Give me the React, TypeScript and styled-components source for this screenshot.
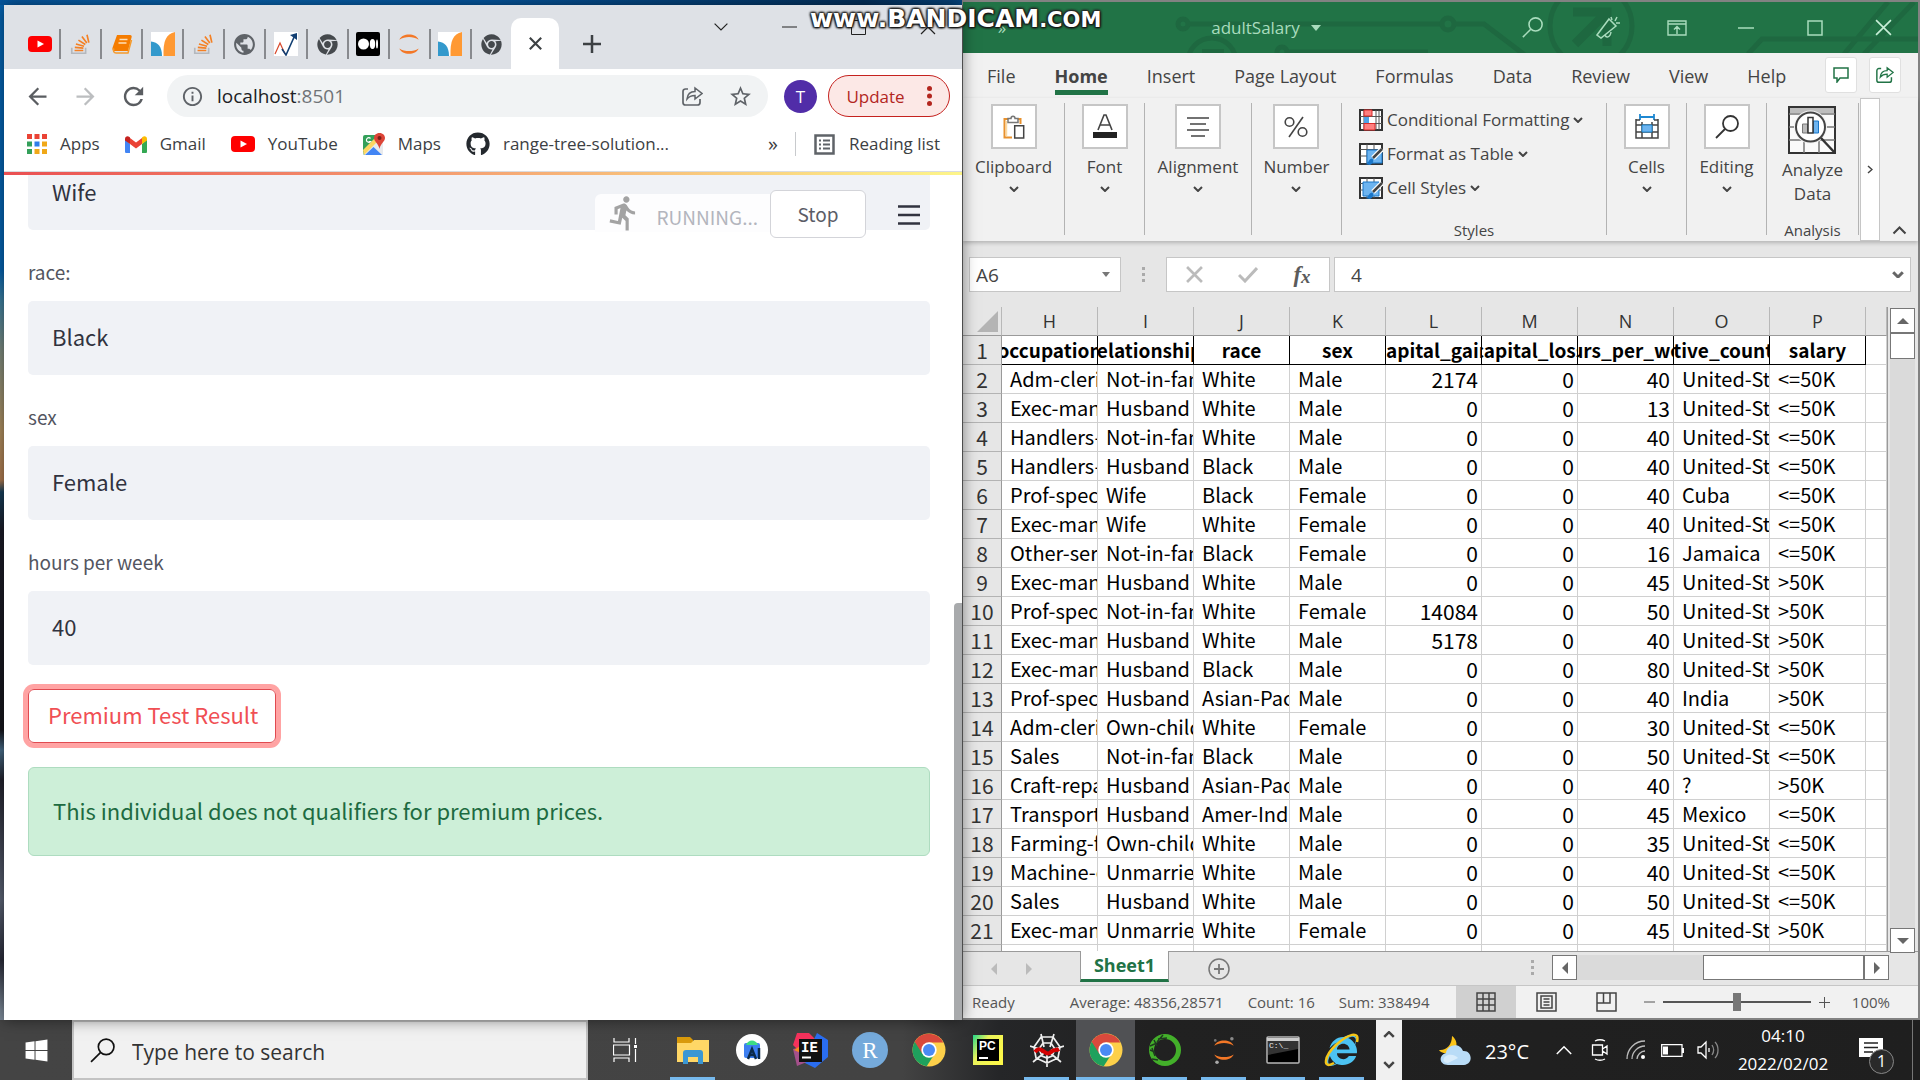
import React from 'react';
import styled, { createGlobalStyle, css } from 'styled-components';
import { FaChrome, FaGithub, FaWindows, FaInternetExplorer } from 'react-icons/fa';
import { MdDirectionsRun, MdPublic, MdStarBorder, MdRefresh, MdArrowBack, MdArrowForward, MdInfoOutline } from 'react-icons/md';

const ui = `"Open Sans", "Noto Sans", sans-serif`;
const source = `"Noto Sans CJK SC", "Noto Sans", sans-serif`;

const GlobalStyle = createGlobalStyle`
  *, *::before, *::after { box-sizing: border-box; }
  body { margin: 0; font-family: ${ui}; overflow: hidden; }
  button, input { font: inherit; color: inherit; margin: 0; padding: 0; border: 0; background: none; border-radius: 0; outline: 0; }
  button { display: inline-flex; align-items: center; justify-content: center; cursor: pointer; white-space: nowrap; }
  a { color: inherit; text-decoration: none; }
  svg { display: block; flex: none; }
`;

/* ---------- desktop ---------- */
const Screen = styled.div`
  position: relative;
  display: flex;
  flex-direction: column;
  height: 100vh;
  overflow: hidden;
`;
const Desktop = styled.main`
  flex: 1;
  min-height: 0;
  display: grid;
  grid-template-columns: 962fr 958fr;
  background:
    linear-gradient(90deg, #0557a0, #0a63ad 12%, #0557a0 25%, #03305c 45%, #0a5aa0 55%, #07497f) top / 100% 5px no-repeat,
    linear-gradient(#0563b0 0, #0563b0 270px, #3d7fa0 300px, #7d8b80 350px, #b09060 430px, #b07b50 480px, #17405c 492px, #1c1c28 530px, #16161c 730px, #4a6f8c 750px, #23232e 780px, #5d6577 900px, #2a2c3a 960px, #7a8796 1010px) left / 4px 100% no-repeat,
    #16161c;
`;
const Watermark = styled.div`
  position: absolute;
  left: 810px;
  top: 4px;
  font: bold 25px/30px "DejaVu Sans", sans-serif;
  color: #fff;
  text-shadow: 0 0 3px #111, 1px 1px 2px #111, -1px -1px 2px #333, 1px -1px 2px #333, -1px 1px 2px #222;
  z-index: 5;
  pointer-events: none;
  small { font-size: 21px; }
`;

/* ---------- Chrome ---------- */
const Browser = styled.section`
  position: relative;
  z-index: 1;
  margin: 5px 0 0 4px;
  display: flex;
  flex-direction: column;
  min-height: 0;
  min-width: 0;
  background: #fff;
  box-shadow: 0 0 14px rgba(0, 0, 0, 0.5), 1px 0 0 #666;
`;
const TabStrip = styled.div`
  display: flex;
  align-items: flex-end;
  height: 64px;
  background: #dee1e6;
`;
const PinnedTabs = styled.div`
  display: flex;
  width: 507px;
  padding-left: 16px;
`;
const PinnedTab = styled.button`
  flex: 1;
  height: 30px;
  margin-bottom: 10px;
  border-right: 2px solid #888a8e;
  &:last-child { border: 0; }
`;
const ActiveTab = styled.button`
  width: 48px;
  height: 51px;
  background: #fff;
  border-radius: 10px 10px 0 0;
`;
const NewTab = styled.button`
  width: 66px;
  height: 51px;
`;
const WindowButtons = styled.div`
  display: flex;
  margin-left: auto;
  align-self: flex-start;
`;
const WindowButton = styled.button`
  width: 69px;
  height: 44px;
`;
const Toolbar = styled.div`
  display: flex;
  align-items: center;
  height: 54px;
  padding: 0 12px 0 9px;
`;
const NavButton = styled.button<{ $dim?: boolean }>`
  width: 48px;
  height: 42px;
  color: ${p => (p.$dim ? '#bcbec0' : '#5a5d61')};
`;
const Omnibox = styled.div`
  flex: 1;
  display: flex;
  align-items: center;
  height: 42px;
  margin-left: 10px;
  padding: 0 16px 0 14px;
  border-radius: 21px;
  background: #f1f3f4;
  color: #5f6368;
`;
const Url = styled.div`
  flex: 1;
  padding-left: 13px;
  font-size: 19px;
  line-height: 26px;
  color: #707478;
  b { font-weight: 400; color: #202124; }
`;
const OmniButton = styled.button`
  width: 24px;
  height: 24px;
  margin-left: 24px;
`;
const Avatar = styled.button`
  width: 33px;
  height: 33px;
  margin: 0 11px 0 16px;
  border-radius: 50%;
  background: #512da8;
  color: #fff;
  font-size: 17px;
`;
const UpdateButton = styled.button`
  width: 122px;
  height: 42px;
  gap: 22px;
  border: 1px solid #c5221f;
  border-radius: 21px;
  background: #fce8e6;
  color: #b3261e;
  font-size: 17px;
`;
const BookmarkBar = styled.nav`
  display: flex;
  align-items: center;
  gap: 25px;
  height: 49px;
  padding: 0 22px 6px 23px;
  border-bottom: 1px solid #dadce0;
  font-size: 17px;
  line-height: 24px;
  color: #3c4043;
`;
const Bookmark = styled.a`
  display: flex;
  align-items: center;
  gap: 13px;
  white-space: nowrap;
`;
const ReadingList = styled.button`
  gap: 14px;
  height: 24px;
  padding-left: 18px;
  margin-left: -8px;
  border-left: 1px solid #c8cacd;
`;
const Overflow = styled.button`
  margin-left: auto;
  font-size: 20px;
`;

/* ---------- Streamlit page ---------- */
const Page = styled.div`
  position: relative;
  flex: 1;
  min-height: 0;
  overflow: hidden;
  padding: 3px 32px 0 24px;
  font-family: ${source};
  color: #31333f;
  &::before {
    content: '';
    position: absolute;
    inset: 0 0 auto;
    height: 3px;
    background: linear-gradient(90deg, #ea4f52, #f5a573 50%, #fdf58a);
  }
`;
const Field = styled.div<{ $cut?: boolean }>`
  display: flex;
  flex-direction: column;
  ${p => p.$cut && css`
    justify-content: flex-end;
    height: 55px;
    overflow: hidden;
  `}
`;
const FieldLabel = styled.label`
  padding: 27px 0 15px;
  font-size: 19px;
  line-height: 29px;
  color: #53555f;
`;
const TextBox = styled.input`
  flex: none;
  width: 100%;
  height: 74px;
  padding: 0 24px 4px;
  border-radius: 5px;
  background: #f0f2f6;
  font-size: 22px;
`;
const ResultButton = styled.button`
  height: 54px;
  margin-top: 24px;
  padding: 0 17px 4px 19px;
  border: 1px solid #e04a50;
  border-radius: 6px;
  box-shadow: 0 0 0 5px #ffa3a3;
  color: #f04f54;
  font-size: 22px;
`;
const Alert = styled.div`
  margin-top: 24px;
  padding: 26px 24px 29px;
  border: 1px solid #aedcc0;
  border-radius: 6px;
  background: #cdefd8;
  color: #1d6b41;
  font-size: 22px;
  line-height: 32px;
`;
const StatusWidget = styled.div`
  position: absolute;
  top: 18px;
  right: 96px;
  display: flex;
  align-items: flex-start;
`;
const Running = styled.div`
  display: flex;
  align-items: center;
  gap: 14px;
  height: 38px;
  margin-top: 4px;
  padding: 0 12px 0 10px;
  background: #fdfdfe;
  border-radius: 6px 0 0 0;
  color: #b3b5bd;
  font-size: 19px;
  line-height: 28px;
  svg { color: #a3a3a3; }
  span { padding-top: 8px; }
`;
const StopButton = styled.button`
  width: 96px;
  height: 48px;
  padding-bottom: 2px;
  border: 1px solid #d3d4d9;
  border-radius: 6px;
  background: #fff;
  color: #5b5d67;
  font-size: 19px;
`;
const MenuButton = styled.button`
  position: absolute;
  top: 32px;
  right: 42px;
  width: 22px;
  height: 22px;
`;
const PageThumb = styled.div`
  position: absolute;
  top: 431px;
  right: 0;
  bottom: 0;
  width: 8px;
  background: #a8aaac;
  border-radius: 4px 0 0 0;
`;

/* ---------- Excel ---------- */
const Excel = styled.section`
  display: flex;
  flex-direction: column;
  min-width: 0;
  min-height: 0;
  border: solid #828282;
  border-width: 2px 2px 2px 1px;
  background: #e6e6e6;
  color: #444;
`;
const TitleBar = styled.header`
  position: relative;
  display: flex;
  height: 51px;
  flex: none;
  background: #217346;
  color: #a9dcbd;
  font-size: 17px;
`;
const Circuit = styled.svg`
  position: absolute;
  right: 0;
  top: 0;
`;
const MoreTools = styled.button`
  position: relative;
  width: 78px;
`;
const DocName = styled.button`
  position: relative;
  flex: 1;
  gap: 11px;
`;
const TitleButton = styled(WindowButton)<{ $wide?: boolean }>`
  position: relative;
  height: 51px;
  width: ${p => (p.$wide ? 82 : 69)}px;
`;
const MenuRow = styled.nav`
  display: flex;
  gap: 39px;
  height: 45px;
  flex: none;
  padding: 0 18px 0 24px;
  background: #f1f1f1;
  font-size: 18px;
`;
const MenuTab = styled.button<{ $on?: boolean }>`
  height: 42px;
  padding-top: 9px;
  border-bottom: 5px solid ${p => (p.$on ? '#217346' : 'transparent')};
  font-weight: ${p => (p.$on ? 700 : 400)};
`;
const MenuActions = styled.div`
  display: flex;
  gap: 12px;
  margin-left: auto;
  padding-top: 4px;
`;
const ActionButton = styled.button`
  width: 32px;
  height: 36px;
  border: 1px solid #e0e0e0;
  border-radius: 3px;
  background: #fff;
`;
const Ribbon = styled.div`
  position: relative;
  display: flex;
  height: 143px;
  flex: none;
  background: #f1f1f1;
  box-shadow: 0 2px 4px rgba(0, 0, 0, 0.22);
  font-size: 17px;
  line-height: 24px;
`;
const Group = styled.div<{ $w?: number }>`
  display: flex;
  flex-direction: column;
  align-items: center;
  height: 132px;
  margin-top: 5px;
  border-right: 1px solid #b3b3b3;
  ${p => (p.$w ? `width: ${p.$w}px;` : 'flex: 1;')}
`;
const GroupButton = styled.button`
  flex-direction: column;
  margin-top: 1px;
`;
const IconBox = styled.span`
  display: grid;
  place-items: center;
  width: 46px;
  height: 45px;
  margin-bottom: 6px;
  border: 2px solid #c6c6c6;
  background: #fff;
`;
const ChevronGap = styled.span`
  padding-top: 7px;
`;
const StyleList = styled.div`
  display: flex;
  flex-direction: column;
  align-items: flex-start;
  align-self: stretch;
  padding-left: 17px;
`;
const StyleButton = styled.button`
  height: 34px;
  gap: 4px;
`;
const GroupCaption = styled.span`
  margin-top: auto;
  margin-bottom: -7px;
  font-size: 15px;
`;
const AnalyzeButton = styled.button`
  flex-direction: column;
  padding-top: 3px;
  white-space: normal;
  svg { margin-bottom: 4px; }
`;
const RibbonScroll = styled.button`
  width: 20px;
  margin-left: 1px;
  border: 1px solid #c6c6c6;
  background: #fff;
`;
const CollapseButton = styled.button`
  width: 38px;
  align-items: flex-end;
  padding-bottom: 6px;
`;
const FormulaRow = styled.div`
  display: flex;
  height: 66px;
  flex: none;
  padding: 16px 7px 15px 6px;
  font-size: 20px;
`;
const NameBox = styled.div`
  display: flex;
  align-items: center;
  width: 152px;
  padding: 0 10px 0 6px;
  border: 1px solid #c6c6c6;
  background: #fff;
  font-size: 19px;
  input { width: 100%; min-width: 0; }
`;
const Grip = styled.span`
  display: grid;
  place-items: center;
  width: 45px;
`;
const FormulaButtons = styled.div`
  display: flex;
  align-items: center;
  width: 164px;
  margin-right: 4px;
  border: 1px solid #c6c6c6;
  background: #fff;
  button { flex: 1; height: 33px; }
`;
const FxButton = styled.button`
  font: italic bold 23px/28px "Liberation Serif", serif;
  color: #5b5b5b;
  sub { font-size: 19px; line-height: 20px; padding-top: 4px; }
`;
const FormulaBox = styled(NameBox)`
  flex: 1;
  width: auto;
  padding: 0 6px 0 16px;
`;
const GridArea = styled.div`
  flex: 1;
  min-height: 0;
  display: flex;
`;
const SheetClip = styled.div`
  flex: 1;
  min-width: 0;
  overflow: hidden;
  border-right: 1px solid #9a9a9a;
`;
const Sheet = styled.table`
  width: 100%;
  table-layout: fixed;
  border-collapse: separate;
  border-spacing: 0;
  background: #fff;
  font-family: ${source};
  font-size: 20px;
  line-height: 28px;
  color: #000;
  tr { height: 29px; }
  th, td { height: 29px; padding: 0; overflow: hidden; white-space: nowrap; }
`;
const ColHead = styled.th`
  border-right: 1px solid #b8b8b8;
  border-bottom: 1px solid #9a9a9a;
  background: #e6e6e6;
  font-family: ${ui};
  font-weight: 400;
  font-size: 18px;
  color: #333;
`;
const RowHead = styled.th`
  border-right: 1px solid #9a9a9a;
  border-bottom: 1px solid #b3b3b3;
  background: #e6e6e6;
  font-weight: 400;
  font-size: 21px;
  color: #333;
`;
const Corner = styled(ColHead)`
  svg { margin: 0 3px 0 auto; }
`;
const Cell = styled.td<{ $num?: boolean }>`
  border-right: 1px solid #d0d0d0;
  border-bottom: 1px solid #d0d0d0;
  ${p => p.$num && 'text-align: right; font-size: 21px;'}
  && { padding: ${p => (p.$num ? '0 3px 0 0' : '0 0 0 8px')}; }
`;
const TitleCell = styled.td`
  border-right: 1px solid #000;
  border-bottom: 1px solid #000;
  font-weight: 700;
  font-size: 19px;
  div { display: flex; justify-content: center; height: 28px; }
`;
const VScroll = styled.div`
  display: flex;
  flex-direction: column;
  width: 25px;
  margin: 1px 3px -2px 2px;
  background: #dadada;
`;
const ScrollButton = styled.button`
  position: relative;
  width: 25px;
  height: 25px;
  flex: none;
  border: 1px solid #777;
  background: #fff;
`;
const VThumb = styled.div`
  height: 26px;
  margin-bottom: auto;
  border: 1px solid #777;
  background: #fff;
`;
const SheetBar = styled.div`
  display: flex;
  height: 35px;
  flex: none;
  border-top: 1px solid #9a9a9a;
  border-bottom: 1px solid #c6c6c6;
`;
const SheetNav = styled.div`
  display: flex;
  justify-content: space-between;
  width: 117px;
  padding: 0 45px 0 25px;
`;
const SheetTab = styled.button`
  width: 89px;
  height: 31px;
  margin-top: -1px;
  border: solid #9a9a9a;
  border-width: 0 1px;
  border-bottom: 3px solid #217346;
  background: #fff;
  color: #217346;
  font-weight: 700;
  font-size: 18px;
`;
const AddSheet = styled.button`
  width: 100px;
`;
const HScroll = styled.div`
  display: flex;
  width: 337px;
  height: 25px;
  margin: 3px 29px 0 auto;
`;
const HGrip = styled(Grip)`
  width: 38px;
  margin-left: auto;
  height: 31px;
`;
const HGroup = styled.div`
  display: flex;
  margin-left: auto;
`;
const HTrack = styled.div`
  display: flex;
  flex: 1;
  justify-content: flex-end;
  background: #dadada;
`;
const HThumb = styled.div`
  width: 161px;
  border: 1px solid #777;
  background: #fff;
`;
const StatusBar = styled.footer`
  display: flex;
  align-items: center;
  height: 32px;
  flex: none;
  padding: 0 28px 0 9px;
  background: #f1f1f1;
  font-size: 15px;
  color: #555;
`;
const Stats = styled.div`
  display: flex;
  gap: 24px;
  margin-left: 55px;
`;
const ViewButton = styled.button<{ $on?: boolean }>`
  width: 60px;
  height: 32px;
  background: ${p => (p.$on ? '#d0d0d0' : 'transparent')};
`;
const Views = styled.div`
  display: flex;
  margin-left: auto;
`;
const ZoomButton = styled.button`
  width: 27px;
  height: 32px;
`;
const ZoomSlider = styled.input`
  appearance: none;
  width: 148px;
  height: 18px;
  background: linear-gradient(#555, #555) center / 100% 2px no-repeat;
  &::-webkit-slider-thumb { appearance: none; width: 8px; height: 18px; background: #777; }
`;
const ZoomValue = styled.span`
  width: 52px;
  text-align: right;
`;

/* ---------- Taskbar ---------- */
const Taskbar = styled.footer`
  display: flex;
  height: 60px;
  flex: none;
  background: linear-gradient(90deg, #444 0, #434343 47%, #252628 52%, #212121 60%, #1f1f1f);
  color: #fff;
`;
const StartButton = styled.button`
  width: 72px;
`;
const SearchBox = styled.label`
  display: flex;
  align-items: center;
  gap: 17px;
  width: 516px;
  padding-left: 16px;
  border: 2px solid #c3c3c3;
  background: #f1f1f1;
  color: #222;
  font-size: 21px;
  input { flex: 1; padding-top: 4px; }
  input::placeholder { color: #333; opacity: 1; }
`;
const TaskButton = styled.button<{ $run?: boolean; $on?: boolean; $wide?: boolean }>`
  position: relative;
  width: ${p => (p.$wide ? 75 : 59)}px;
  background: ${p => (p.$on ? '#505154' : 'transparent')};
  ${p => p.$run && css`
    &::after {
      content: '';
      position: absolute;
      bottom: 0;
      left: ${p.$on ? 0 : 7}px;
      right: ${p.$on ? 0 : 7}px;
      height: 3px;
      background: #76b9ed;
    }
  `}
`;
const TaskScroll = styled.div`
  display: flex;
  flex-direction: column;
  width: 26px;
  margin-left: 5px;
  background: #f0f0f0;
  button { flex: 1; }
`;
const Tray = styled.div`
  display: flex;
  align-items: stretch;
  margin-left: auto;
`;
const Weather = styled.button`
  gap: 13px;
  margin-right: 17px;
  padding-top: 2px;
  font-size: 20px;
`;
const TrayButton = styled.button`
  width: 36px;
`;
const Clock = styled.button`
  flex-direction: column;
  width: 114px;
  font-size: 17px;
  line-height: 28px;
`;
const Notice = styled.button`
  position: relative;
  width: 73px;
  margin-right: 7px;
  padding-right: 11px;
  border-right: 1px solid #777;
`;
const NoticeBadge = styled.span`
  position: absolute;
  left: 29px;
  top: 29px;
  width: 25px;
  height: 25px;
  border: 1px solid #888;
  border-radius: 50%;
  background: #2a2a2a;
  font-size: 16px;
  line-height: 23px;
`;

/* ---------- drawings ---------- */
type IcoProps = { w: number; h?: number; vb?: string; children: React.ReactNode };
const Ico = ({ w, h = w, vb, children }: IcoProps) => (
  <svg width={w} height={h} viewBox={vb || `0 0 ${w} ${h}`} fill="none" aria-hidden="true">{children}</svg>
);
const Chevron = ({ w = 10, up, color = '#444', sw = 2 }: { w?: number; up?: boolean; color?: string; sw?: number }) => (
  <Ico w={w} h={w * 0.6} vb="0 0 10 6"><path d={up ? 'M1 5 5 1 9 5' : 'M1 1 5 5 9 1'} stroke={color} strokeWidth={sw * 10 / w} /></Ico>
);
const Triangle = ({ dir, color = '#666' }: { dir: 'up' | 'down' | 'left' | 'right'; color?: string }) => {
  const d = { up: 'M0 9 6 3 12 9Z', down: 'M0 3 6 9 12 3Z', left: 'M9 0 3 6 9 12Z', right: 'M3 0 9 6 3 12Z' }[dir];
  return <Ico w={12}><path d={d} fill={color} /></Ico>;
};
const YouTube = () => (
  <Ico w={24} h={18}><rect y="1" width="24" height="16" rx="4" fill="#f00" /><path d="M9.500 5.500 16 9l-6.500 3.500Z" fill="#fff" /></Ico>
);
const Stack = () => (
  <Ico w={24} vb="-2 0 26 24"><path d="M1 16v6h15v-6" stroke="#b4b8bd" strokeWidth="1.800" /><path d="M4 19h9.500M4.300 15.700l9.300.8M5.500 12l8.800 2.400M8.200 7.800l7.500 4.800M12 4l5.300 7M17.500 2l2 8.500" stroke="#f48024" strokeWidth="1.800" /></Ico>
);
const Book = () => (
  <Ico w={24}><path d="M7 3h13c1.500 0 2 1 1.600 2.300L18 19H4.500C2.500 19 2 17 2.600 15.500Z" fill="#f57c00" /><path d="M4 16.500C2.500 19 4 21 6 21h12l3.500-13" stroke="#f59b2d" strokeWidth="1.500" /><path d="M9.500 7.500h8M8.500 11h8" stroke="#ffe0b8" strokeWidth="1.500" /></Ico>
);
const Medlab = () => (
  <Ico w={24}><path d="M0 0h24v24H0z" fill="#fff" /><path d="M0 9.500C7 10 11 15 11 24H0Z" fill="#3399cc" /><path d="M24 0C15 2 12 9 12.500 24H24Z" fill="#ff9933" /></Ico>
);
const Trend = () => (
  <Ico w={24}><path d="M0 0h24v24H0z" fill="#fff" /><path d="M1 22 6 11l5 11" stroke="#d9482b" strokeWidth="1.200" /><path d="m8 17 4 6L21 3" stroke="#123f73" strokeWidth="1.600" /><path d="m16 3 7-2v7Z" fill="#123f73" /></Ico>
);
const Medium = () => (
  <Ico w={24}><rect width="24" height="24" rx="2" fill="#000" /><circle cx="7.500" cy="12" r="5.500" fill="#fff" /><ellipse cx="16.500" cy="12" rx="2.700" ry="5" fill="#fff" /><ellipse cx="21" cy="12" rx="1" ry="4.500" fill="#fff" /></Ico>
);
const Jupyter = ({ dots }: { dots?: boolean }) => (
  <Ico w={28} vb="0 0 28 32"><path d="M3 11C6 3 22 3 25 11 19 7 9 7 3 11ZM3 21c3 8 19 8 22 0-6 4-16 4-22 0Z" fill="#f37726" />{dots && <><circle cx="23" cy="3" r="2" fill="#8a8a8a" /><circle cx="4" cy="5" r="1.500" fill="#777" /><circle cx="6" cy="30" r="2" fill="#aaa" /></>}</Ico>
);
const ChromeColor = ({ s = 34 }: { s?: number }) => (
  <Ico w={s} vb="0 0 34 34">
    <circle cx="17" cy="17" r="16.500" fill="#fdd04a" />
    <path d="M2.700 8.700a16.500 16.500 0 0 0 12 24.600l8-12.600L17 17Z" fill="#1fa15d" />
    <path d="M2.700 8.700 10.500 21 17 9.500h14.300A16.500 16.500 0 0 0 2.700 8.700Z" fill="#d9493c" />
    <circle cx="17" cy="17" r="7.700" fill="#fff" /><circle cx="17" cy="17" r="6" fill="#4a8af4" />
  </Ico>
);
const AppsGrid = () => (
  <Ico w={20}>{['#ea4335', '#ea4335', '#ea4335', '#34a05a', '#2f7de9', '#f0a818', '#34a05a', '#f0a818', '#f0a818'].map((c, i) => (
    <rect key={i} x={(i % 3) * 7.5} y={Math.floor(i / 3) * 7.5} width="5" height="5" fill={c} />
  ))}</Ico>
);
const Gmail = () => (
  <Ico w={22} h={17}><path d="M0 3v12.500c0 1 .5 1.500 1.500 1.500H5V8Z" fill="#4285f4" /><path d="M22 3v12.500c0 1-.5 1.500-1.500 1.500H17V8Z" fill="#34a853" /><path d="m5 8 6 4.500L17 8V2l-6 4.500L5 2Z" fill="#ea4335" /><path d="M0 3C0 .5 2.500-.5 4.500 1L5 1.500V8L0 4.500Z" fill="#c5221f" /><path d="M22 3c0-2.500-2.500-3.500-4.500-2l-.5.500V8l5-3.500Z" fill="#fbbc04" /></Ico>
);
const MapsIcon = () => (
  <Ico w={22}><rect y="2" width="20" height="20" rx="2" fill="#34a05a" /><path d="M0 20 18 3l2 1v18H2Z" fill="#e8eaed" /><path d="M0 17 13 4l3 3L1 22Z" fill="#fdd663" /><path d="m2 22 8.500-8 8.500 8Z" fill="#4285f4" /><path d="M16.500 0C20 0 22 2.500 22 5c0 3.500-4.500 5.500-5.500 11C15.500 10.500 11 8.500 11 5c0-2.500 2-5 5.500-5Z" fill="#dc4437" /><circle cx="16.500" cy="5" r="2" fill="#7c1e16" /><path d="M7.500 5.500a2.300 2.300 0 1 0 0 3H5.700" stroke="#fff" strokeWidth="1.200" /></Ico>
);
const ReadingIcon = () => (
  <Ico w={21}><path d="M1.500 1.500h18v18h-18z" stroke="#5f6368" strokeWidth="2.500" /><path d="M5 6.500h2M5 10.500h2M5 14.500h2M9 6.500h7M9 10.500h7M9 14.500h7" stroke="#5f6368" strokeWidth="2" /></Ico>
);
const ShareIcon = ({ color, s = 21 }: { color: string; s?: number }) => (
  <Ico w={s} vb="0 0 21 21"><path d="M6 3H3.500C2 3 1 4 1 5.500v11C1 18 2 19 3.500 19h12c1.500 0 2.500-1 2.500-2.500V13" stroke={color} strokeWidth="1.700" /><path d="M5 13c.5-5 3-7.500 8-7.500V2l7 5.500-7 5.500V9.500C9 9.500 7 10.500 5 13Z" stroke={color} strokeWidth="1.500" /></Ico>
);
const Magnifier = ({ s = 22, color = '#333', sw = 1.8 }: { s?: number; color?: string; sw?: number }) => (
  <Ico w={s} vb="0 0 24 24"><circle cx="15.500" cy="8.500" r="7.500" stroke={color} strokeWidth={sw} /><path d="M10 14 1 23" stroke={color} strokeWidth={sw} /></Ico>
);
const Dots = () => (
  <Ico w={4} h={16}><path d="M0 0h3v3H0zM0 6h3v3H0zM0 12h3v3H0z" fill="#aaa" /></Ico>
);
const Close = ({ s, color, sw = 1.500 }: { s: number; color: string; sw?: number }) => (
  <Ico w={s} vb="0 0 16 16"><path d="m1 1 14 14M15 1 1 15" stroke={color} strokeWidth={sw} /></Ico>
);
const Clipboard = () => (
  <Ico w={22} h={24}><path d="M6 4H1.500v18.500H9M13 4h4.500v5" stroke="#e8912d" strokeWidth="2" /><path d="M3.500 6v15" stroke="#fbd9a0" strokeWidth="1.500" /><path d="M5 7.500v-4h3C8 .5 12 .5 12 3.500h3v4Z" stroke="#777" fill="#fff" strokeWidth="1.500" /><path d="M11.700 10.700h9V23h-9z" fill="#fff" stroke="#444" strokeWidth="1.500" /></Ico>
);
const CondFormat = () => (
  <Ico w={24} h={22}><path d="M1 1h22v20H1z" fill="#fff" stroke="#333" strokeWidth="2" /><path d="M1 7.500h22M1 14.500h22M17 1v20M20 1v20M5 1v20" stroke="#555" /><path d="M5 1h8v6H5zM5 14.500h11V21H5z" fill="#ff8080" stroke="#d92b2b" /><path d="M5 8h5v6H5z" fill="#4fa3e8" /></Ico>
);
const BrushTable = ({ full }: { full?: boolean }) => (
  <Ico w={24} h={22}><path d="M1 1h22v20H1z" fill="#fff" stroke="#333" strokeWidth="2" /><path d="M1 6.500h22M1 13h22M8 1v20M15 1v20" stroke="#555" />
    <path d={full ? 'M4 5h16v14H4z' : 'M8 7h15v13H8z'} fill="#6db4f0" stroke="#1976c9" /><path d="m23 6-9 9" stroke="#fff" strokeWidth="5" /><path d="m23 6-9 9" stroke="#444" strokeWidth="2.500" /><path d="M6 21c4 0 3-5 7-5.500 2 1 2 5-2 6.500Z" fill="#1976c9" /></Ico>
);
const CellsIcon = () => (
  <Ico w={24} h={26}><path d="M5 0v6M19 0v6M5 3h14" stroke="#1e88d2" strokeWidth="1.800" /><path d="M1 5v19h22V5M1 11h22M1 18h22M7 8v16M17 8v16M1 6h4M19 6h4" stroke="#444" strokeWidth="1.500" /><path d="M7 11h10v7H7z" fill="#6db4f0" stroke="#1e88d2" /></Ico>
);
const AnalyzeIcon = () => (
  <Ico w={48}><path d="M1 1h46v46H1z" fill="#fafafa" stroke="#333" strokeWidth="2" /><path d="M2 2h44v5H2z" fill="#bdbdbd" /><path d="M1 8h46M1 21h46M1 34h46M16 34v13M31 34v13" stroke="#777" strokeWidth="1.500" /><circle cx="22.500" cy="21" r="16.500" fill="#f1f1f1" /><circle cx="22.500" cy="21" r="14.500" fill="#fff" stroke="#444" strokeWidth="2" /><path d="M14.500 18h5v9h-5z" fill="#bbb" stroke="#777" /><path d="M25.500 15h5v12h-5z" fill="#6db4f0" stroke="#1976c9" /><path d="M20 11.500h5V27h-5z" fill="#fff" stroke="#333" strokeWidth="1.500" /><path d="m33 32 14 15" stroke="#333" strokeWidth="2.500" /></Ico>
);
const Spider = () => (
  <Ico w={34}><path d="M14 14 11 1M20 14l4-13M13 17 0 13M21 17l13-4M14 20 3 29M20 20l11 9M17 20v14M11 4h12l7 10-2 11-11 5-11-5-2-11ZM13 10h8l4 6-3 7-5 2-5-2-3-7Z" stroke="#eee" strokeWidth="1.700" /><path d="M5 19c3-4 5-3 8-1s5 4 8 1 5-1 8-3" stroke="#d40000" strokeWidth="4" /></Ico>
);
const Explorer = () => (
  <Ico w={32} h={28}><path d="M0 1h13l3 3v4H0z" fill="#d99a0b" /><path d="M0 7h14l3-3h15v22H0Z" fill="#ffd766" /><path d="M6 17c0-2 1-3 3-3h14c2 0 3 1 3 3v11h-5v-7H11v7H6Z" fill="#3b97d3" /></Ico>
);
const AndroidStudio = () => (
  <Ico w={32}><circle cx="16" cy="16" r="16" fill="#fff" /><rect x="8" y="9" width="16" height="15" rx="2" fill="#3d7ff0" /><path d="M10 11c2-6 10-6 12 0Z" fill="#3ddc84" /><path d="m12 25 4-10 4 10M14 21h5M23 14v11" stroke="#0b2a4a" strokeWidth="2.500" /></Ico>
);
const IntelliJ = () => (
  <Ico w={36}><path d="M4 1h12l8 8-20 8-4-4Z" fill="#f5325c" /><path d="m24 1 11 7v17L22 36 10 30Z" fill="#2a6df0" /><path d="m0 17 8-2 8 14-12 5Z" fill="#a4508b" /><path d="m1 18 6-4 3 8Z" fill="#f58a1f" /><rect x="6" y="7" width="23" height="23" fill="#111" /><text x="8" y="20" fontFamily="Liberation Mono" fontWeight="bold" fontSize="14" fill="#fff">IE</text><path d="M9 25.500h9" stroke="#fff" strokeWidth="2" /></Ico>
);
const RIcon = () => (
  <Ico w={36}><circle cx="18" cy="18" r="18" fill="#75aadb" /><text x="18" y="26" textAnchor="middle" fontFamily="Liberation Serif" fontSize="23" fill="#fff">R</text></Ico>
);
const PyCharm = () => (
  <Ico w={30}><defs><linearGradient id="pyc" x1="0" y1="0" x2="1" y2="0.6"><stop stopColor="#21d789" /><stop offset=".4" stopColor="#e9f25a" /><stop offset="1" stopColor="#fcf84a" /></linearGradient></defs><path d="M0 0h30v30H0z" fill="url(#pyc)" /><path d="M4 4h22v22H4z" fill="#000" /><text x="6" y="15" fontFamily="Liberation Sans" fontWeight="bold" fontSize="12" fill="#fff">PC</text><path d="M6 23h9" stroke="#fff" strokeWidth="2" /></Ico>
);
const Anaconda = () => (
  <Ico w={32}><circle cx="16" cy="16" r="13.500" stroke="#43b02a" strokeWidth="5" /><path d="M14 1 8 8M18 4l-9 1M5 6l3 6M1 12l7-3M6 18l-5-2M6 22l-3-8M9 26l-6-1" stroke="#1f3a1f" strokeWidth="1.500" /></Ico>
);
const Cmd = () => (
  <Ico w={34} h={28}><rect x="1" y="1" width="32" height="26" rx="1" fill="#000" stroke="#b8b8b8" strokeWidth="1.500" /><path d="M1 2h32v3H1z" fill="#ccc" /><path d="M2 5h30v8L2 19Z" fill="#333" /><text x="3" y="12" fontFamily="Liberation Mono" fontSize="8" fill="#eee">C:\_</text></Ico>
);
const IeWrap = styled.span`
  display: grid;
  place-items: center;
  color: #4cc3f2;
  & > * { grid-area: 1 / 1; }
`;
const WeatherIcon = () => (
  <Ico w={33} h={30}><path d="M13 0c6 4 7 15-3 17-5 1-9-1-10-3 7 1 13-5 13-14Z" fill="#fcc419" /><path d="M9 29c-9 0-10-10-2-12 1-9 14-11 17-2 9-1 11 13 1 14Z" fill="#b9dcf7" /><path d="M9 27c-6 0-6-6 0-8 5-1 8 1 10 3" fill="#d9edfc" /></Ico>
);

/* ---------- data ---------- */
const tabs: [string, React.ReactNode][] = [
  ['YouTube', <YouTube />],
  ['Stack Overflow', <Stack />],
  ['Docs', <Book />],
  ['Analytics', <Medlab />],
  ['Stack Overflow', <Stack />],
  ['Web page', <MdPublic size={25} color="#5f6368" />],
  ['Trends', <Trend />],
  ['Chrome', <FaChrome size={21} color="#45494d" />],
  ['Medium', <Medium />],
  ['Jupyter', <Jupyter />],
  ['Analytics', <Medlab />],
  ['Chrome', <FaChrome size={21} color="#45494d" />],
];

const US = 'United-States';
const titles = ['occupation', 'relationship', 'race', 'sex', 'capital_gain', 'capital_loss', 'hours_per_week', 'native_country', 'salary'];
const rows: (string | number)[][] = [
  ['Adm-clerical', 'Not-in-family', 'White', 'Male', 2174, 0, 40, US, '<=50K'],
  ['Exec-managerial', 'Husband', 'White', 'Male', 0, 0, 13, US, '<=50K'],
  ['Handlers-cleaners', 'Not-in-family', 'White', 'Male', 0, 0, 40, US, '<=50K'],
  ['Handlers-cleaners', 'Husband', 'Black', 'Male', 0, 0, 40, US, '<=50K'],
  ['Prof-specialty', 'Wife', 'Black', 'Female', 0, 0, 40, 'Cuba', '<=50K'],
  ['Exec-managerial', 'Wife', 'White', 'Female', 0, 0, 40, US, '<=50K'],
  ['Other-service', 'Not-in-family', 'Black', 'Female', 0, 0, 16, 'Jamaica', '<=50K'],
  ['Exec-managerial', 'Husband', 'White', 'Male', 0, 0, 45, US, '>50K'],
  ['Prof-specialty', 'Not-in-family', 'White', 'Female', 14084, 0, 50, US, '>50K'],
  ['Exec-managerial', 'Husband', 'White', 'Male', 5178, 0, 40, US, '>50K'],
  ['Exec-managerial', 'Husband', 'Black', 'Male', 0, 0, 80, US, '>50K'],
  ['Prof-specialty', 'Husband', 'Asian-Pac-Islander', 'Male', 0, 0, 40, 'India', '>50K'],
  ['Adm-clerical', 'Own-child', 'White', 'Female', 0, 0, 30, US, '<=50K'],
  ['Sales', 'Not-in-family', 'Black', 'Male', 0, 0, 50, US, '<=50K'],
  ['Craft-repair', 'Husband', 'Asian-Pac-Islander', 'Male', 0, 0, 40, '?', '>50K'],
  ['Transport-moving', 'Husband', 'Amer-Indian-Eskimo', 'Male', 0, 0, 45, 'Mexico', '<=50K'],
  ['Farming-fishing', 'Own-child', 'White', 'Male', 0, 0, 35, US, '<=50K'],
  ['Machine-op-inspct', 'Unmarried', 'White', 'Male', 0, 0, 40, US, '<=50K'],
  ['Sales', 'Husband', 'White', 'Male', 0, 0, 50, US, '<=50K'],
  ['Exec-managerial', 'Unmarried', 'White', 'Female', 0, 0, 45, US, '>50K'],
];

const BrowserWindow = () => (
  <Browser>
    <TabStrip>
      <PinnedTabs>
        {tabs.map(([name, icon], i) => <PinnedTab key={i} aria-label={name}>{icon}</PinnedTab>)}
      </PinnedTabs>
      <ActiveTab aria-label="Close tab"><Close s={13} color="#3c4043" sw={2.6} /></ActiveTab>
      <NewTab aria-label="New tab"><Ico w={18}><path d="M9 0v18M0 9h18" stroke="#3c4043" strokeWidth="2.500" /></Ico></NewTab>
      <WindowButtons>
        <WindowButton aria-label="Search tabs"><Chevron w={16} color="#222" sw={1.2} /></WindowButton>
        <WindowButton aria-label="Minimize"><Ico w={15} h={2}><path d="M0 1h15" stroke="#222" /></Ico></WindowButton>
        <WindowButton aria-label="Maximize"><Ico w={15}><path d="M.5.5h14v14H.5z" stroke="#222" /></Ico></WindowButton>
        <WindowButton aria-label="Close"><Close s={16} color="#222" sw={1.2} /></WindowButton>
      </WindowButtons>
    </TabStrip>
    <Toolbar>
      <NavButton aria-label="Back"><MdArrowBack size={27} /></NavButton>
      <NavButton aria-label="Forward" $dim><MdArrowForward size={27} /></NavButton>
      <NavButton aria-label="Reload"><MdRefresh size={29} /></NavButton>
      <Omnibox>
        <MdInfoOutline size={23} />
        <Url><b>localhost</b>:8501</Url>
        <OmniButton aria-label="Share"><ShareIcon color="#5f6368" /></OmniButton>
        <OmniButton aria-label="Bookmark"><MdStarBorder size={25} /></OmniButton>
      </Omnibox>
      <Avatar>T</Avatar>
      <UpdateButton>Update<Ico w={5} h={20}><circle cx="2.500" cy="2.500" r="2.500" fill="#b3261e" /><circle cx="2.500" cy="10" r="2.500" fill="#b3261e" /><circle cx="2.500" cy="17.500" r="2.500" fill="#b3261e" /></Ico></UpdateButton>
    </Toolbar>
    <BookmarkBar>
      <Bookmark href="#"><AppsGrid />Apps</Bookmark>
      <Bookmark href="#"><Gmail />Gmail</Bookmark>
      <Bookmark href="#"><YouTube />YouTube</Bookmark>
      <Bookmark href="#"><MapsIcon />Maps</Bookmark>
      <Bookmark href="#"><FaGithub size={24} color="#24292e" />range-tree-solution...</Bookmark>
      <Overflow>»</Overflow>
      <ReadingList><ReadingIcon />Reading list</ReadingList>
    </BookmarkBar>
    <Page>
      <Field $cut><TextBox aria-label="relationship" defaultValue="Wife" /></Field>
      <Field><FieldLabel htmlFor="race">race:</FieldLabel><TextBox id="race" defaultValue="Black" /></Field>
      <Field><FieldLabel htmlFor="sex">sex</FieldLabel><TextBox id="sex" defaultValue="Female" /></Field>
      <Field><FieldLabel htmlFor="hours">hours per week</FieldLabel><TextBox id="hours" defaultValue="40" /></Field>
      <ResultButton>Premium Test Result</ResultButton>
      <Alert role="alert">This individual does not qualifiers for premium prices.</Alert>
      <StatusWidget>
        <Running><MdDirectionsRun size={38} /><span>RUNNING...</span></Running>
        <StopButton>Stop</StopButton>
      </StatusWidget>
      <MenuButton aria-label="Menu"><Ico w={22}><path d="M0 2.500h22M0 11h22M0 19.500h22" stroke="#31333f" strokeWidth="2.500" /></Ico></MenuButton>
      <PageThumb />
    </Page>
  </Browser>
);

const group = (name: string, w: number, icon: React.ReactNode) => (
  <Group $w={w}>
    <GroupButton><IconBox>{icon}</IconBox>{name}<ChevronGap><Chevron /></ChevronGap></GroupButton>
  </Group>
);

const ExcelWindow = () => (
  <Excel>
    <TitleBar>
      <Circuit width="760" height="51" viewBox="0 0 760 51" fill="none" stroke="#1e6840" strokeWidth="5" aria-hidden="true">
        <circle cx="25" cy="22" r="5" /><path d="M30 22h254" /><circle cx="54" cy="60" r="24" /><path d="M44 49h22" strokeWidth="4" /><circle cx="124" cy="50" r="5" /><path d="M130 50h140" />
        <circle cx="290" cy="22" r="6" /><path d="M296 22h30l42 32" /><circle cx="433" cy="24" r="41" /><path d="M415 10h34v34M449 10l-32 32" strokeWidth="9" /><path d="M590 52l14-15h160M686 52l44-52M706 52l50-52" />
      </Circuit>
      <MoreTools>»</MoreTools>
      <DocName>adultSalary<Ico w={10} h={6}><path d="M0 0h10L5 6Z" fill="#a9dcbd" /></Ico></DocName>
      <TitleButton $wide aria-label="Search"><Magnifier s={21} color="#a9dcbd" /></TitleButton>
      <TitleButton aria-label="Coming soon"><Ico w={24}><path d="m13 3 7 7L5 22l-4-3Z M9 19c1 3 5 3 6-3M15 1l1 3M21 1l-2 4M24 7h-4" stroke="#a9dcbd" strokeWidth="1.500" /></Ico></TitleButton>
      <TitleButton aria-label="Ribbon display options"><Ico w={20} h={16}><path d="M1 1h18v14H1zM1 4h18M10 14V7M7 9.500 10 6.500l3 3" stroke="#a9dcbd" strokeWidth="1.400" /></Ico></TitleButton>
      <TitleButton aria-label="Minimize"><Ico w={16} h={2}><path d="M0 1h16" stroke="#a9dcbd" strokeWidth="1.500" /></Ico></TitleButton>
      <TitleButton aria-label="Maximize"><Ico w={16}><path d="M1 1h14v14H1z" stroke="#a9dcbd" strokeWidth="1.500" /></Ico></TitleButton>
      <TitleButton aria-label="Close"><Close s={17} color="#c9eed8" /></TitleButton>
    </TitleBar>
    <MenuRow>
      {['File', 'Home', 'Insert', 'Page Layout', 'Formulas', 'Data', 'Review', 'View', 'Help'].map(t => <MenuTab key={t} $on={t === 'Home'}>{t}</MenuTab>)}
      <MenuActions>
        <ActionButton aria-label="Comments"><Ico w={16}><path d="M1 1h14v10H7l-3 4v-4H1Z" stroke="#217346" strokeWidth="1.500" /></Ico></ActionButton>
        <ActionButton aria-label="Share"><ShareIcon s={18} color="#217346" /></ActionButton>
      </MenuActions>
    </MenuRow>
    <Ribbon>
      {group('Clipboard', 102, <Clipboard />)}
      {group('Font', 80, <Ico w={24} h={25}><path d="m5 16 6-15h2l6 15M7.500 11h9" stroke="#444" strokeWidth="1.600" /><path d="M0 18h24v6H0z" fill="#222" /></Ico>)}
      {group('Alignment', 107, <Ico w={22} h={20}><path d="M0 1h22M3 7h16M0 13h22M4 19h14" stroke="#444" strokeWidth="1.600" /></Ico>)}
      {group('Number', 90, <Ico w={24} h={22}><circle cx="5.500" cy="6" r="4.300" stroke="#444" strokeWidth="1.600" /><circle cx="18.500" cy="16" r="4.300" stroke="#444" strokeWidth="1.600" /><path d="M19 1 5 21" stroke="#444" strokeWidth="1.600" /></Ico>)}
      <Group>
        <StyleList>
          <StyleButton><CondFormat />Conditional Formatting<Chevron /></StyleButton>
          <StyleButton><BrushTable />Format as Table<Chevron /></StyleButton>
          <StyleButton><BrushTable full />Cell Styles<Chevron /></StyleButton>
        </StyleList>
        <GroupCaption>Styles</GroupCaption>
      </Group>
      {group('Cells', 80, <CellsIcon />)}
      {group('Editing', 80, <Magnifier s={24} />)}
      <Group $w={92}>
        <AnalyzeButton><AnalyzeIcon />Analyze<br />Data</AnalyzeButton>
        <GroupCaption>Analysis</GroupCaption>
      </Group>
      <RibbonScroll aria-label="Scroll ribbon"><Ico w={6} h={9}><path d="m1 1 4 3.500L1 8" stroke="#444" strokeWidth="1.500" /></Ico></RibbonScroll>
      <CollapseButton aria-label="Collapse ribbon"><Chevron w={15} up /></CollapseButton>
    </Ribbon>
    <FormulaRow>
      <NameBox><input aria-label="Name box" defaultValue="A6" /><Ico w={8} h={5}><path d="M0 0h8L4 5Z" fill="#777" /></Ico></NameBox>
      <Grip><Dots /></Grip>
      <FormulaButtons>
        <button aria-label="Cancel"><Close s={17} color="#bbb" sw={2.5} /></button>
        <button aria-label="Enter"><Ico w={20} h={16}><path d="m1 8 6 6L19 1" stroke="#bbb" strokeWidth="3" /></Ico></button>
        <FxButton aria-label="Insert function">f<sub>x</sub></FxButton>
      </FormulaButtons>
      <FormulaBox><input aria-label="Formula" defaultValue="4" /><Chevron w={12} color="#666" sw={3} /></FormulaBox>
    </FormulaRow>
    <GridArea>
      <SheetClip>
        <Sheet>
          <colgroup><col width="39" />{titles.map(t => <col key={t} width="96" />)}<col /></colgroup>
          <thead>
            <tr>
              <Corner><Ico w={21}><path d="M21 0v21H0Z" fill="#b4b4b4" /></Ico></Corner>
              {'HIJKLMNOP'.split('').map(c => <ColHead key={c}>{c}</ColHead>)}
              <ColHead />
            </tr>
          </thead>
          <tbody>
            <tr><RowHead>1</RowHead>{titles.map(t => <TitleCell key={t}><div>{t}</div></TitleCell>)}<Cell /></tr>
            {rows.map((r, i) => (
              <tr key={i}><RowHead>{i + 2}</RowHead>{r.map((v, j) => <Cell key={j} $num={typeof v === 'number'}>{v}</Cell>)}<Cell /></tr>
            ))}
            <tr><RowHead />{titles.map(t => <Cell key={t} />)}<Cell /></tr>
          </tbody>
        </Sheet>
      </SheetClip>
      <VScroll>
        <ScrollButton aria-label="Scroll up"><Triangle dir="up" /></ScrollButton>
        <VThumb />
        <ScrollButton aria-label="Scroll down"><Triangle dir="down" /></ScrollButton>
      </VScroll>
    </GridArea>
    <SheetBar>
      <SheetNav>
        <button aria-label="Previous sheet"><Triangle dir="left" color="#bbb" /></button>
        <button aria-label="Next sheet"><Triangle dir="right" color="#bbb" /></button>
      </SheetNav>
      <SheetTab>Sheet1</SheetTab>
      <AddSheet aria-label="Add sheet"><Ico w={22}><circle cx="11" cy="11" r="10" stroke="#777" strokeWidth="1.500" /><path d="M11 6v10M6 11h10" stroke="#777" strokeWidth="1.800" /></Ico></AddSheet>
      <HGroup>
        <HGrip><Dots /></HGrip>
        <HScroll>
          <ScrollButton aria-label="Scroll left"><Triangle dir="left" /></ScrollButton>
          <HTrack><HThumb /></HTrack>
          <ScrollButton aria-label="Scroll right"><Triangle dir="right" /></ScrollButton>
        </HScroll>
      </HGroup>
    </SheetBar>
    <StatusBar>
      Ready
      <Stats><span>Average: 48356,28571</span><span>Count: 16</span><span>Sum: 338494</span></Stats>
      <Views>
        <ViewButton $on aria-label="Normal"><Ico w={20}><path d="M1 1h18v18H1zM7 1v18M13 1v18M1 7h18M1 13h18" stroke="#444" strokeWidth="1.500" /></Ico></ViewButton>
        <ViewButton aria-label="Page layout"><Ico w={21} h={20}><path d="M1 1h19v18H1zM5 4h11v12H5zM7.500 7h6M7.500 10h6M7.500 13h6" stroke="#444" strokeWidth="1.500" /></Ico></ViewButton>
        <ViewButton aria-label="Page break"><Ico w={21} h={20}><path d="M1 1h19v18H1zM1 11h13V1M7.500 1v10" stroke="#444" strokeWidth="1.500" /></Ico></ViewButton>
      </Views>
      <ZoomButton aria-label="Zoom out"><Ico w={11} h={2}><path d="M0 1h11" stroke="#555" /></Ico></ZoomButton>
      <ZoomSlider type="range" aria-label="Zoom" defaultValue={50} />
      <ZoomButton aria-label="Zoom in"><Ico w={11}><path d="M0 5.500h11M5.500 0v11" stroke="#555" /></Ico></ZoomButton>
      <ZoomValue>100%</ZoomValue>
    </StatusBar>
  </Excel>
);

export default function App() {
  return (
    <Screen>
      <GlobalStyle />
      <Desktop>
        <BrowserWindow />
        <ExcelWindow />
      </Desktop>
      <Watermark>www.BANDICAM<small>.COM</small></Watermark>
      <Taskbar>
        <StartButton aria-label="Start"><FaWindows size={25} /></StartButton>
        <SearchBox><Magnifier s={25} color="#111" sw={1.6} /><input aria-label="Search" placeholder="Type here to search" /></SearchBox>
        <TaskButton $wide aria-label="Task view"><Ico w={25} h={24}><path d="M1 0v4h15V0M1 24v-4h15v4M.5 7h16v10H.5zM22.500 0v6M22.500 11v13" stroke="#fff" strokeWidth="1.200" /><path d="M21 7h3v3h-3z" fill="#fff" /></Ico></TaskButton>
        <TaskButton $run aria-label="File Explorer"><Explorer /></TaskButton>
        <TaskButton aria-label="Android Studio"><AndroidStudio /></TaskButton>
        <TaskButton aria-label="IntelliJ IDEA"><IntelliJ /></TaskButton>
        <TaskButton aria-label="RStudio"><RIcon /></TaskButton>
        <TaskButton aria-label="Chrome"><ChromeColor /></TaskButton>
        <TaskButton aria-label="PyCharm"><PyCharm /></TaskButton>
        <TaskButton $run aria-label="Spyder"><Spider /></TaskButton>
        <TaskButton $run $on aria-label="Chrome window"><ChromeColor /></TaskButton>
        <TaskButton $run aria-label="Anaconda"><Anaconda /></TaskButton>
        <TaskButton $run aria-label="Jupyter"><Jupyter dots /></TaskButton>
        <TaskButton $run aria-label="Command prompt"><Cmd /></TaskButton>
        <TaskButton $run aria-label="Internet Explorer">
          <IeWrap><FaInternetExplorer size={31} /><Ico w={36}><path d="M10 31C-2 38 0 24 12 13S36-2 33 10" stroke="#f5c518" strokeWidth="2.500" /></Ico></IeWrap>
        </TaskButton>
        <TaskScroll>
          <button aria-label="Scroll taskbar up"><Chevron w={12} up sw={2.5} /></button>
          <button aria-label="Scroll taskbar down"><Chevron w={12} sw={2.5} /></button>
        </TaskScroll>
        <Tray>
          <Weather><WeatherIcon />23°C</Weather>
          <TrayButton aria-label="Hidden icons"><Chevron w={18} up color="#fff" sw={1.5} /></TrayButton>
          <TrayButton aria-label="Meet now"><Ico w={18} h={22}><path d="M1.500 6h10v10h-10zM11.500 10l4.500-3v8l-4.500-3M4 2c3-1.500 7-1.500 10 0M4 20c3 1.500 7 1.500 10 0" stroke="#fff" strokeWidth="1.300" /></Ico></TrayButton>
          <TrayButton aria-label="Network"><Ico w={20}><path d="M1 19C1 9 9 1 19 1M6 19C6 12 12 6 19 6M11 19c0-4 4-8 8-8" stroke="#bbb" strokeWidth="1.300" /><circle cx="17" cy="17" r="2" fill="#fff" /></Ico></TrayButton>
          <TrayButton aria-label="Battery"><Ico w={23} h={13}><path d="M.7.7H21v11.600H.7z" stroke="#fff" strokeWidth="1.300" /><path d="M2 2.500h5v8H2zM21 4h2v5h-2z" fill="#fff" /></Ico></TrayButton>
          <TrayButton aria-label="Volume"><Ico w={23} h={20}><path d="M1 7v6h3l5 5V2L4 7ZM12 8v4" stroke="#fff" strokeWidth="1.300" /><path d="M15 5c2 3 2 7 0 10M18 2c4 4 4 12 0 16" stroke="#888" strokeWidth="1.300" /></Ico></TrayButton>
          <Clock><span>04:10</span><span>2022/02/02</span></Clock>
          <Notice aria-label="Notifications"><Ico w={24} h={24}><path d="M0 0h24v19h-8l-5 5v-5H0Z" fill="#fff" /><path d="M5 5h14M5 9.500h14M5 14h9" stroke="#222" strokeWidth="1.500" /></Ico><NoticeBadge>1</NoticeBadge></Notice>
        </Tray>
      </Taskbar>
    </Screen>
  );
}
